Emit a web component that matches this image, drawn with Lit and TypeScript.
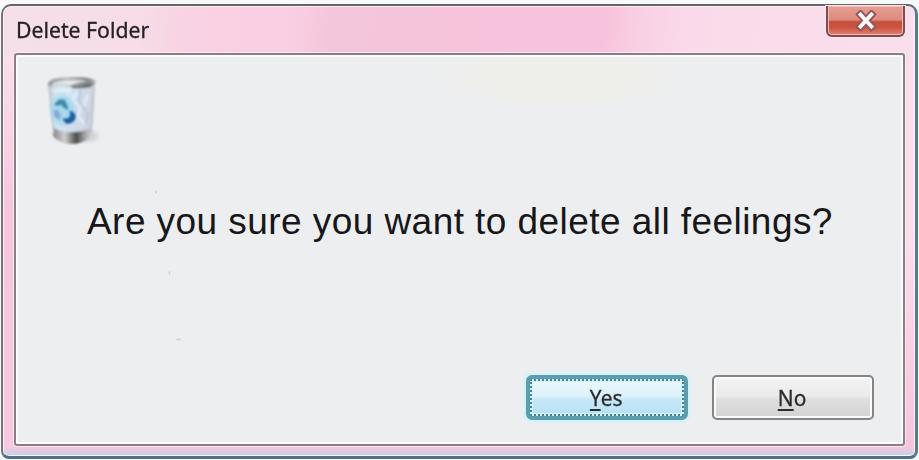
import { LitElement, html, css } from "lit";
import { customElement, property } from "lit/decorators.js";

@customElement("recycle-bin-icon")
class RecycleBinIcon extends LitElement {
  static styles = css`
    :host { display: block; width: 60px; height: 76px; }
    svg { display: block; }
  `;
  render() {
    return html`<svg width="60" height="76" viewBox="0 0 60 76" aria-hidden="true">
      <defs>
        <linearGradient id="glass" x1="0" x2="1" y1="0" y2="0.2">
          <stop offset="0" stop-color="#c6d0d8" /><stop offset="0.25" stop-color="#cfe6f2" />
          <stop offset="0.6" stop-color="#d3deed" /><stop offset="1" stop-color="#cdd2e0" />
        </linearGradient>
        <linearGradient id="base" x1="0" x2="1">
          <stop offset="0" stop-color="#858587" /><stop offset="0.3" stop-color="#d0d0d0" />
          <stop offset="0.6" stop-color="#4c4c4e" /><stop offset="0.8" stop-color="#a0a0a2" /><stop offset="1" stop-color="#d6d6d6" />
        </linearGradient>
        <linearGradient id="rim" x1="0" x2="1">
          <stop offset="0" stop-color="#94989a" /><stop offset="0.4" stop-color="#bfc2c3" />
          <stop offset="0.8" stop-color="#7b7d7f" /><stop offset="1" stop-color="#b5b8ba" />
        </linearGradient>
        <filter id="soft"><feGaussianBlur stdDeviation="0.9" /></filter>
        <filter id="softer"><feGaussianBlur stdDeviation="2" /></filter>
      </defs>
      <ellipse cx="44" cy="64" rx="13" ry="6" fill="#c4c5c7" opacity="0.7" filter="url(#softer)" />
      <g filter="url(#soft)">
        <path d="M7 10 L54 11 L51 62 Q44 70 30 70 Q16 69 12 62 Z" fill="url(#glass)" />
        <path d="M12 55 Q19 61 31 60 Q43 60 51 55 L50 64 Q43 72 30 72 Q17 71 12 64 Z" fill="url(#base)" />
        <path d="M7 12 Q8 5 30 5 Q54 5 55 10 Q53 16 45 16 Q32 17 24 13 Q14 12 7 15 Z" fill="url(#rim)" />
        <path d="M12 11 Q28 7 48 9 Q35 10 29 13 Q19 11 12 13 Z" fill="#e9ebec" />
        <path d="M31 15 Q43 16 51 12" fill="none" stroke="#66696c" stroke-width="2" />
        <path d="M8 13 L13 61 M53 15 L50 60" fill="none" stroke="#b5bcc4" stroke-width="1.4" />
        <path d="M12 19 L28 18 L26 24 M37 20 L31 28 L40 35 L36 44 L44 52 M47 22 L43 34" fill="none" stroke="#eaf4f9" stroke-width="4" opacity="0.55" />
        <path d="M39 18 L38 29 L45 40 M34 39 L32 51 M47 40 L45 52" fill="none" stroke="#b4bfd8" stroke-width="3" opacity="0.6" />
      </g>
      <ellipse cx="22" cy="38" rx="12" ry="15" fill="#8fd2ee" opacity="0.6" filter="url(#softer)" />
      <g filter="url(#soft)">
        <path d="M14 31 L19 27 L24 28 L27 35 L27 38 L23 36 L20 33 L14 34 Z" fill="#3f8cab" />
        <path d="M13 38 L17 38 L20 44 L18 48 L13 44 Z" fill="#86a9d2" />
        <path d="M29 39 Q35 41 34 46 Q32 52 25 51 L22 47 L27 47 Q31 44 29 39 Z" fill="#1f5c9e" stroke="#1f5c9e" />
      </g>
    </svg>`;
  }
}

@customElement("dialog-button")
class DialogButton extends LitElement {
  @property() label = "";
  @property({ type: Boolean, reflect: true }) primary = false;
  static styles = css`
    :host { display: block; width: 162px; height: 45px; }
    .button {
      box-sizing: border-box; width: 100%; height: 100%; padding: 0 2px 0 0;
      display: flex; align-items: center; justify-content: center;
      border: 2px solid #858585; border-radius: 5px;
      background: linear-gradient(#f3f3f3 0%, #ebebeb 45%, #dfdfdf 55%, #d2d2d2 100%);
      box-shadow: inset 0 0 0 2px #fbfbfb;
      font: 22px "Noto Sans", sans-serif; color: #2c2c2e;
    }
    .primary {
      position: relative;
      border: 4px solid #5b9dae; border-radius: 6px;
      background: linear-gradient(#e9f7fd 0%, #dff2fb 45%, #c6e8f8 55%, #b8e1f4 100%);
      box-shadow: 0 0 3px 2px #c9f4fb, inset 0 0 0 3px #c9f5fb;
    }
    .focus { position: absolute; inset: 0; border: 2px dotted #547f90; border-radius: 2px; }
    .caption { display: block; transform: scaleX(0.95); line-height: 26px; margin-top: -1px; -webkit-text-stroke: 0.3px #2c2c2e; }
    .key { text-decoration: underline; text-decoration-thickness: 1.5px; text-underline-offset: 3px; }
  `;
  render() {
    return html`<button class="button ${this.primary ? "primary" : ""}">
      ${this.primary ? html`<span class="focus"></span>` : null}
      <span class="caption"><span class="key">${this.label.slice(0, 1)}</span>${this.label.slice(1)}</span>
    </button>`;
  }
}

@customElement("app-root")
class AppRoot extends LitElement {
  static styles = css`
    :host {
      display: block; box-sizing: border-box; width: 919px; height: 460px;
      padding: 4px 1px 1px 1px; background: #f8fafa; overflow: hidden;
    }
    .window {
      box-sizing: border-box; height: 455px; display: flex; flex-direction: column;
      padding: 0 10px 10px 11px;
      border: solid; border-color: #656467 #587b90 #4e6f8c #77727a;
      border-width: 2px 3px 3px 2px;
      border-radius: 10px 10px 8px 8px;
      box-shadow: inset 0 0 0 1px #fdeef6;
      background:
        linear-gradient(#c9d6ec00 98%, #c3d2ea 100%),
        linear-gradient(#f8d0e400 12%, #f6c6e0 45%, #f6c9e0 100%) 0 0 / 14px 100% no-repeat,
        linear-gradient(#f8cbe000 50%, #f6c6dc 97%) 0 0 / 100% 100% no-repeat,
        linear-gradient(95deg, #f5dfe8 0%, #f6dde7 15%, #f8d3e3 20%, #fbcfe3 27%, #fbcfe3 31%, #f4c6db 36%, #f4c4da 45%, #f7c2dc 55%, #f7c3dc 66%, #f9cee3 69%, #fadaea 75%, #f9dfeb 100%) 0 0 / 100% 50px no-repeat,
        #fadfea;
    }
    .titlebar { height: 47px; flex: none; display: flex; justify-content: space-between; }
    .title {
      margin: 8px 0 0 2px; font: 22px/30px "Noto Sans", sans-serif; color: #242024;
      white-space: nowrap; transform: scaleX(0.965); transform-origin: left;
      -webkit-text-stroke: 0.3px #242024;
    }
    .close {
      box-sizing: border-box; width: 79px; height: 31px; padding: 0; margin: 0;
      display: flex; align-items: center; justify-content: center;
      border: 2px solid #7d4c50; border-top: 0; border-radius: 0 0 6px 6px;
      background: linear-gradient(#e5a097 0%, #dd8a7e 48%, #c5503f 54%, #c9543f 74%, #df8371 100%);
      box-shadow: inset 0 0 0 1px #f1b9b0, 0 0 0 1px #fbe5ec;
    }
    .content {
      box-sizing: border-box; flex: 1; display: flex; flex-direction: column;
      position: relative;
      border: 2px solid #8b7c86; border-radius: 3px;
      box-shadow: inset 0 0 0 2px #fcfcfd, 0 0 0 1px #fce9f3;
      background:
        radial-gradient(ellipse 130px 32px at 540px 22px, #eeeeea 0%, #eeeeea 60%, #eeeeea00 100%),
        #edeef0;
      padding: 17px 29px 24px 25px;
    }
    .icon { height: 76px; }
    .message {
      margin: 52px 0 0 46px; height: 44px; white-space: nowrap;
      font: 37px/44px "Liberation Sans", Arial, sans-serif; letter-spacing: 0.44px; color: #17171a;
    }
    .specks { position: absolute; left: 124px; top: 125px; }
    .actions { margin-top: auto; display: flex; justify-content: flex-end; gap: 24px; }
  `;
  render() {
    return html`<section class="window">
      <header class="titlebar">
        <div class="title">Delete Folder</div>
        <button class="close" aria-label="Close">
          <svg width="24" height="22" viewBox="0 0 24 22">
            <path d="M6.5 4.500 L17.5 16.500 M17.5 4.500 L6.5 16.500" stroke="#925458" stroke-width="7.5" stroke-linecap="square" />
            <path d="M6.5 4.500 L17.5 16.500 M17.5 4.500 L6.5 16.500" stroke="#fbf7f7" stroke-width="3.8" stroke-linecap="square" />
          </svg>
        </button>
      </header>
      <main class="content">
        <svg class="specks" width="60" height="170" viewBox="140 180 60 170" aria-hidden="true">
          <g fill="#cfd0d3">
            <ellipse cx="156" cy="192" rx="1" ry="1.6" />
            <ellipse cx="169.5" cy="273" rx="0.8" ry="2" />
            <ellipse cx="178.5" cy="339.5" rx="3" ry="0.9" />
          </g>
        </svg>
        <div class="icon"><recycle-bin-icon></recycle-bin-icon></div>
        <div class="message">Are you sure you want to delete all feelings?</div>
        <div class="actions">
          <dialog-button label="Yes" primary></dialog-button>
          <dialog-button label="No"></dialog-button>
        </div>
      </main>
    </section>`;
  }
}
